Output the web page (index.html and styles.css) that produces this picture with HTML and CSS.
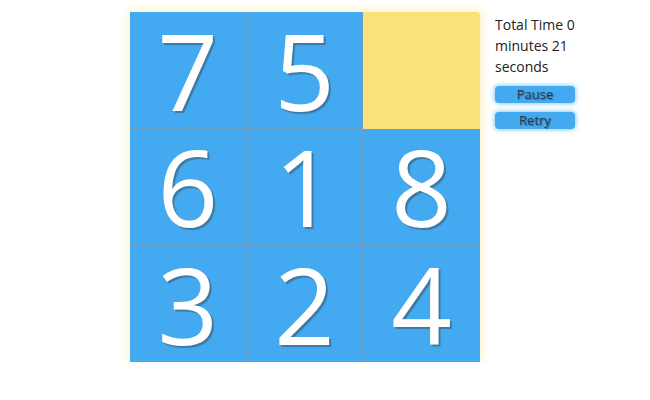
FILE: index.html
```html
<!DOCTYPE html>
<html>
<head>
<meta charset="utf-8">
<link rel="stylesheet" href="styles.css">
</head>
<body>
<div class="app">
  <div class="board">
    <div class="tile">7</div>
    <div class="tile">5</div>
    <div class="tile empty"></div>
    <div class="tile">6</div>
    <div class="tile">1</div>
    <div class="tile">8</div>
    <div class="tile">3</div>
    <div class="tile">2</div>
    <div class="tile">4</div>
  </div>
  <div class="side">
    <div class="timer">Total Time 0 minutes 21 seconds</div>
    <button class="btn">Pause</button>
    <button class="btn">Retry</button>
  </div>
</div>
</body>
</html>
```
FILE: styles.css
```css
html, body {
  margin: 0;
  padding: 0;
  background: #ffffff;
}
body {
  font-family: "Open Sans", "Liberation Sans", sans-serif;
}
.app {
  display: flex;
  align-items: flex-start;
  padding: 12px 0 0 130px;
  gap: 15px;
}
.board {
  width: 350px;
  height: 350px;
  display: grid;
  grid-template-columns: repeat(3, 1fr);
  grid-template-rows: repeat(3, 1fr);
  background: #f9e277;
  border-radius: 0 4px 4px 4px;
  box-shadow: 0 0 8px 2px rgba(249, 226, 119, 0.45);
}
.tile {
  background: #43aaf2;
  border: 1px solid #6b9fc3;
  border-width: 0 1px 1px 0;
  color: #ffffff;
  font-family: "Open Sans", "Liberation Sans", sans-serif;
  font-weight: 400;
  font-size: 106px;
  line-height: 90px;
  display: flex;
  align-items: center;
  justify-content: center;
  text-shadow: 2px 2px 1px rgba(60, 60, 60, 0.45);
}
.tile:nth-child(3n) { border-right: none; }
.tile:nth-child(n+7) { border-bottom: none; }
.tile.empty {
  background: transparent;
  border-color: transparent;
}
.side {
  width: 90px;
  display: flex;
  flex-direction: column;
  align-items: flex-start;
}
.timer {
  font-size: 14px;
  line-height: 21px;
  color: #222222;
  margin-top: 2px;
  margin-bottom: 9px;
}
.btn {
  width: 80px;
  height: 17px;
  margin: 0 0 9px 0;
  padding: 0;
  border: none;
  border-radius: 4px;
  background: #43aaf2;
  box-shadow: 0 0 4px 1px rgba(67, 170, 242, 0.6);
  font-family: "Open Sans", "Liberation Sans", sans-serif;
  font-size: 13px;
  line-height: 17px;
  color: #2b3a44;
  text-shadow: 1px 1px 1px rgba(0, 0, 0, 0.35);
}
```
